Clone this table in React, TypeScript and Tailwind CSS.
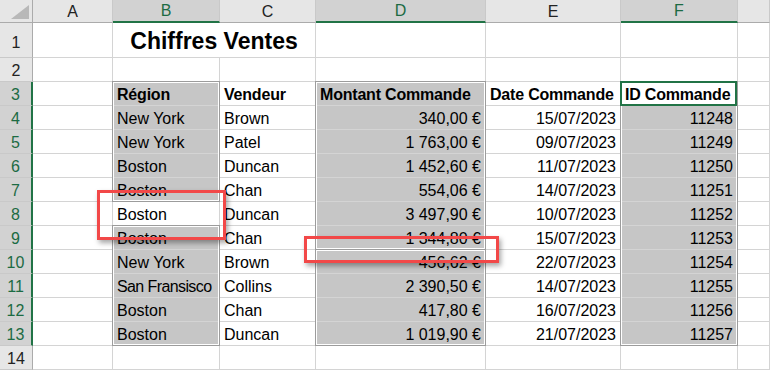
import React from "react";

const rows: string[][] = [
  ["New York", "Brown", "340,00 €", "15/07/2023", "11248"],
  ["New York", "Patel", "1 763,00 €", "09/07/2023", "11249"],
  ["Boston", "Duncan", "1 452,60 €", "11/07/2023", "11250"],
  ["Boston", "Chan", "554,06 €", "14/07/2023", "11251"],
  ["Boston", "Duncan", "3 497,90 €", "10/07/2023", "11252"],
  ["Boston", "Chan", "1 344,80 €", "15/07/2023", "11253"],
  ["New York", "Brown", "456,62 €", "22/07/2023", "11254"],
  ["San Fransisco", "Collins", "2 390,50 €", "14/07/2023", "11255"],
  ["Boston", "Chan", "417,80 €", "16/07/2023", "11256"],
  ["Boston", "Duncan", "1 019,90 €", "21/07/2023", "11257"],
];

const cols = ["A", "B", "C", "D", "E", "F", ""];
const selCols = ["B", "D", "F"];

const gridCls =
  "grid grid-cols-[33px_80px_107px_96px_170px_135px_117px_1fr] grid-rows-[23px_35px_repeat(13,24px)]";

function ColHead({ l }: { l: string }) {
  const sel = selCols.includes(l);
  return (
    <div
      className={
        "flex items-center justify-center border-r border-[#c9c9c9] " +
        (sel
          ? "bg-[#d2d2d2] text-[#1c6b43] border-b-2 border-b-[#217346]"
          : "bg-[#e6e6e6] text-[#222] border-b border-b-[#ababab]")
      }
    >
      <span className="leading-[18px] pt-[1px]">{l}</span>
    </div>
  );
}

function RowHead({ n }: { n: number }) {
  const sel = n >= 3 && n <= 13;
  return (
    <div
      className={
        "flex items-end justify-center border-b border-[#c9c9c9] " +
        (sel
          ? "bg-[#d2d2d2] text-[#1c6b43] border-r-2 border-r-[#217346]"
          : "bg-[#e6e6e6] text-[#222] border-r border-r-[#ababab]") +
        (n === 1 ? " pb-[5px]" : " pb-[1px]")
      }
    >
      <span className="leading-[18px]">{n}</span>
    </div>
  );
}

function Cell({
  text = "",
  gray = false,
  right = false,
  bold = false,
  tight = false,
}: {
  text?: string;
  gray?: boolean;
  right?: boolean;
  bold?: boolean;
  tight?: boolean;
}) {
  return (
    <div
      className={
        "flex items-end border-r border-b border-[#d4d4d4] px-[4px] pb-[1px] whitespace-nowrap overflow-hidden " +
        (gray ? "bg-[#c6c6c6] " : "bg-white ") +
        (right ? "justify-end " : "justify-start ") +
        (bold ? "font-bold tracking-[-0.2px] " : "") +
        (tight ? "tracking-[-0.6px]" : "")
      }
    >
      <span className="leading-[18px] text-black">{text}</span>
    </div>
  );
}

const outline =
  "border border-[#9c9c9c] shadow-[inset_0_0_0_1px_#ffffff] -mt-[1px] -ml-[1px]";

export default function App() {
  return (
    <div
      className="relative w-[770px] h-[371px] overflow-hidden bg-white text-[16px]"
      style={{ fontFamily: '"Liberation Sans", Arial, sans-serif' }}
    >
      <div className={gridCls}>
        {/* corner */}
        <div className="bg-[#e6e6e6] border-r border-b border-[#ababab] flex items-end justify-end p-[3px]">
          <svg width="18" height="14" viewBox="0 0 18 14">
            <polygon points="18,0 18,14 0,14" fill="#b8b8b8" />
          </svg>
        </div>
        {cols.map((c, i) => (
          <ColHead key={i} l={c} />
        ))}

        {/* row 1 */}
        <RowHead n={1} />
        <Cell />
        <div className="col-span-2 flex items-end justify-center border-r border-b border-[#d4d4d4] pb-[3px]">
          <span className="font-bold text-[23px] leading-[26px] text-black">
            Chiffres Ventes
          </span>
        </div>
        <Cell />
        <Cell />
        <Cell />
        <Cell />

        {/* row 2 */}
        <RowHead n={2} />
        {cols.map((_, i) => (
          <Cell key={i} />
        ))}

        {/* row 3 */}
        <RowHead n={3} />
        <Cell />
        <Cell text="Région" gray bold />
        <Cell text="Vendeur" bold />
        <Cell text="Montant Commande" gray bold />
        <Cell text="Date Commande" bold />
        <Cell text="ID Commande" bold />
        <Cell />

        {rows.map((r, i) => {
          const n = i + 4;
          return (
            <React.Fragment key={n}>
              <RowHead n={n} />
              <Cell />
              <Cell text={r[0]} gray={n !== 8} tight={n === 11} />
              <Cell text={r[1]} />
              <Cell text={r[2]} gray right />
              <Cell text={r[3]} right />
              <Cell text={r[4]} gray right />
              <Cell />
            </React.Fragment>
          );
        })}

        {/* row 14 */}
        <RowHead n={14} />
        {cols.map((_, i) => (
          <Cell key={i} />
        ))}
      </div>

      {/* selection outlines overlay */}
      <div className={"absolute inset-0 pointer-events-none " + gridCls}>
        <div className={"col-start-3 row-start-4 row-end-9 " + outline} />
        <div className={"col-start-3 row-start-10 row-end-15 " + outline} />
        <div className={"col-start-5 row-start-4 row-end-11 " + outline} />
        <div className={"col-start-5 row-start-11 row-end-15 " + outline} />
        <div className={"col-start-7 row-start-4 row-end-15 " + outline} />
        <div className="col-start-7 row-start-4 row-end-5 border-2 border-[#217346] -mt-[1px] -ml-[1px] mr-[1px]" />
      </div>

      {/* annotation rectangles */}
      <div className="absolute left-[97px] top-[190px] w-[129px] h-[50px] border-[3px] border-[#f24848] shadow-[2px_3px_5px_rgba(0,0,0,0.35)] pointer-events-none" />
      <div className="absolute left-[304px] top-[236px] w-[195px] h-[27px] border-[3px] border-[#f24848] shadow-[2px_3px_5px_rgba(0,0,0,0.35)] pointer-events-none" />
    </div>
  );
}
